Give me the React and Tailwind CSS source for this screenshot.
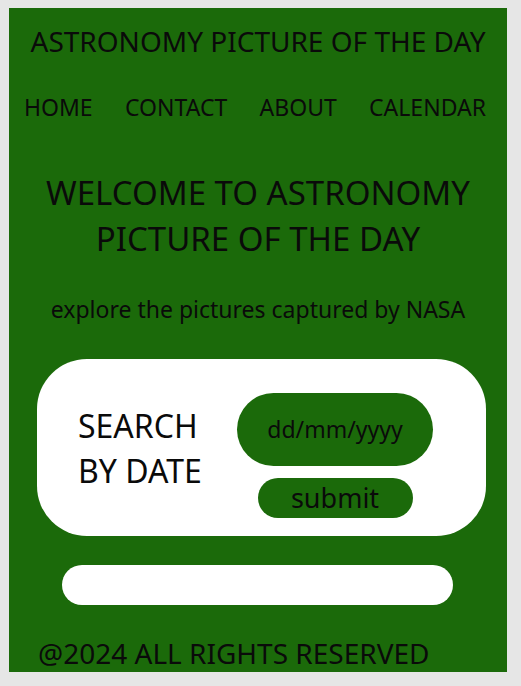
import React from 'react'

const navItems = ["HOME", "CONTACT", "ABOUT", "CALENDAR"];

const App = () => {
    return (
        <div className="min-h-[686px] bg-[#e6e6e6] pt-[8px] pl-[9px] font-['Noto_Sans',sans-serif] text-[#0a0a0a]">
            <div className="w-[498px] h-[664px] bg-[#1b6a0a] overflow-hidden flex flex-col">
                {/* Header */}
                <h1 className="mt-[16px] text-center text-[28px] leading-[34px] font-normal">ASTRONOMY PICTURE OF THE DAY</h1>

                <nav className="mt-[34px] flex justify-between pl-[15px] pr-[21px] text-[23px] leading-[30px]">
                    {navItems.map((item) => (
                        <a key={item} href="#">{item}</a>
                    ))}
                </nav>

                {/* Hero */}
                <h2 className="mt-[48px] text-center text-[33px] leading-[46px] font-normal">
                    WELCOME TO ASTRONOMY
                    <br />
                    PICTURE OF THE DAY
                </h2>
                <p className="mt-[32px] text-center text-[23px] leading-[30px]">explore the pictures captured by NASA</p>

                {/* Search card */}
                <div className="mt-[35px] ml-[28px] w-[449px] h-[177px] shrink-0 bg-white rounded-[50px] flex items-center">
                    <div className="ml-[41px] w-[160px] text-[32px] leading-[45px]">
                        SEARCH
                        <br />
                        BY DATE
                    </div>
                    <div className="ml-[-1px] mt-[15px] flex flex-col items-center">
                        <input
                            type="text"
                            placeholder="dd/mm/yyyy"
                            className="w-[196px] h-[73px] rounded-full bg-[#1b6a0a] text-center text-[23px] placeholder:text-[#0a0a0a] outline-none"
                        />
                        <button className="mt-[12px] w-[155px] h-[40px] rounded-full bg-[#1b6a0a] text-[27px] leading-[40px]">submit</button>
                    </div>
                </div>

                <div className="mt-[29px] ml-[53px] w-[391px] h-[40px] shrink-0 bg-white rounded-full"></div>

                <footer className="mt-[30px] ml-[29px] text-[28px] leading-[36px]">@2024 ALL RIGHTS RESERVED</footer>
            </div>
        </div>
    )
}

export default App
